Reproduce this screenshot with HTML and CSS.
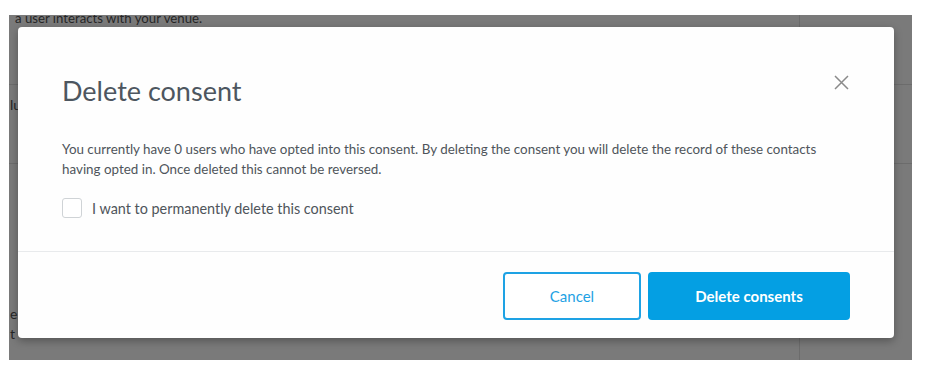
FILE: index.html
```html
<!DOCTYPE html>
<html>
<head>
<meta charset="utf-8">
<link rel="stylesheet" href="styles.css">
</head>
<body>
<div class="screen">
  <div class="page">
    <p class="bg-line bg-top">a user interacts with your venue.</p>
    <div class="bg-rule rule-1"></div>
    <p class="bg-line bg-mid">lu</p>
    <div class="bg-rule rule-2"></div>
    <p class="bg-line bg-low">e</p>
    <p class="bg-line bg-low2">t</p>
    <div class="bg-vrule"></div>
  </div>
  <div class="modal">
    <div class="modal-header">
      <h2 class="modal-title">Delete consent</h2>
      <button class="close" aria-label="Close">
        <svg width="15" height="15" viewBox="0 0 15 15"><path d="M1 1 L14 14 M14 1 L1 14" stroke="#8a8a8a" stroke-width="1.5" fill="none"/></svg>
      </button>
    </div>
    <div class="modal-body">
      <p class="desc">You currently have 0 users who have opted into this consent. By deleting the consent you will delete the record of these contacts having opted in. Once deleted this cannot be reversed.</p>
      <label class="check">
        <span class="box"></span>
        <span class="check-label">I want to permanently delete this consent</span>
      </label>
    </div>
    <div class="modal-footer">
      <button class="btn btn-outline">Cancel</button>
      <button class="btn btn-primary">Delete consents</button>
    </div>
  </div>
</div>
</body>
</html>
```
FILE: styles.css
```css
html, body {
  margin: 0;
  padding: 0;
  background: #ffffff;
  font-family: Lato, "Open Sans", sans-serif;
}
.screen {
  position: relative;
  margin: 15px 0 0 9px;
  width: 903px;
  height: 345px;
  background: #7a7a7a;
  overflow: hidden;
}
.page {
  position: relative;
  height: 100%;
}
.bg-line {
  margin: 0;
  font-size: 14px;
  line-height: 16px;
  color: #262626;
  white-space: nowrap;
  position: absolute;
}
.bg-top { left: 6px; top: -5px; font-size: 13.2px; }
.bg-mid { left: 1px; top: 82px; }
.bg-low { left: 1px; top: 291px; }
.bg-low2 { left: 1px; top: 311px; }
.bg-rule {
  position: absolute;
  left: 0;
  width: 100%;
  height: 1px;
  background: #6c6c6c;
}
.rule-1 { top: 69px; }
.rule-2 { top: 148px; }
.bg-vrule {
  position: absolute;
  left: 790px;
  top: 0;
  width: 1px;
  height: 100%;
  background: #6c6c6c;
}
.modal {
  position: absolute;
  left: 9px;
  top: 12px;
  width: 876px;
  height: 311px;
  background: #fefefe;
  border-radius: 4px;
  box-shadow: 0 3px 8px rgba(0,0,0,0.3);
  box-sizing: border-box;
  display: flex;
  flex-direction: column;
}
.modal-header {
  display: flex;
  justify-content: space-between;
  align-items: flex-start;
  padding: 44px 45px 0 44px;
}
.modal-title {
  margin: 0;
  font-size: 27px;
  line-height: 40px;
  font-weight: 400;
  color: #4d5660;
}
.close {
  border: 0;
  background: none;
  padding: 0;
  margin: 4px 0 0 0;
  width: 15px;
  height: 15px;
  display: flex;
  cursor: pointer;
}
.modal-body {
  padding: 28px 44px 33px 44px;
  border-bottom: 1px solid #e8eaec;
}
.desc {
  margin: 0;
  font-size: 13.4px;
  line-height: 20px;
  color: #4f555b;
}
.check {
  display: flex;
  align-items: center;
  gap: 10px;
  margin-top: 19px;
}
.box {
  width: 18px;
  height: 18px;
  border: 1px solid #cfd3d6;
  border-radius: 3px;
  background: #fff;
}
.check-label {
  font-size: 14.4px;
  color: #4f555b;
}
.modal-footer {
  display: flex;
  justify-content: flex-end;
  gap: 7px;
  padding: 20px 44px 0 44px;
}
.btn {
  height: 48px;
  border-radius: 4px;
  font-family: Lato, sans-serif;
  font-size: 15px;
  cursor: pointer;
  box-sizing: border-box;
}
.btn-outline {
  width: 138px;
  background: #fff;
  border: 2px solid #1ea2e4;
  color: #1ea2e4;
}
.btn-primary {
  width: 202px;
  background: #049fe3;
  border: 0;
  color: #fff;
  font-weight: 700;
}
```
